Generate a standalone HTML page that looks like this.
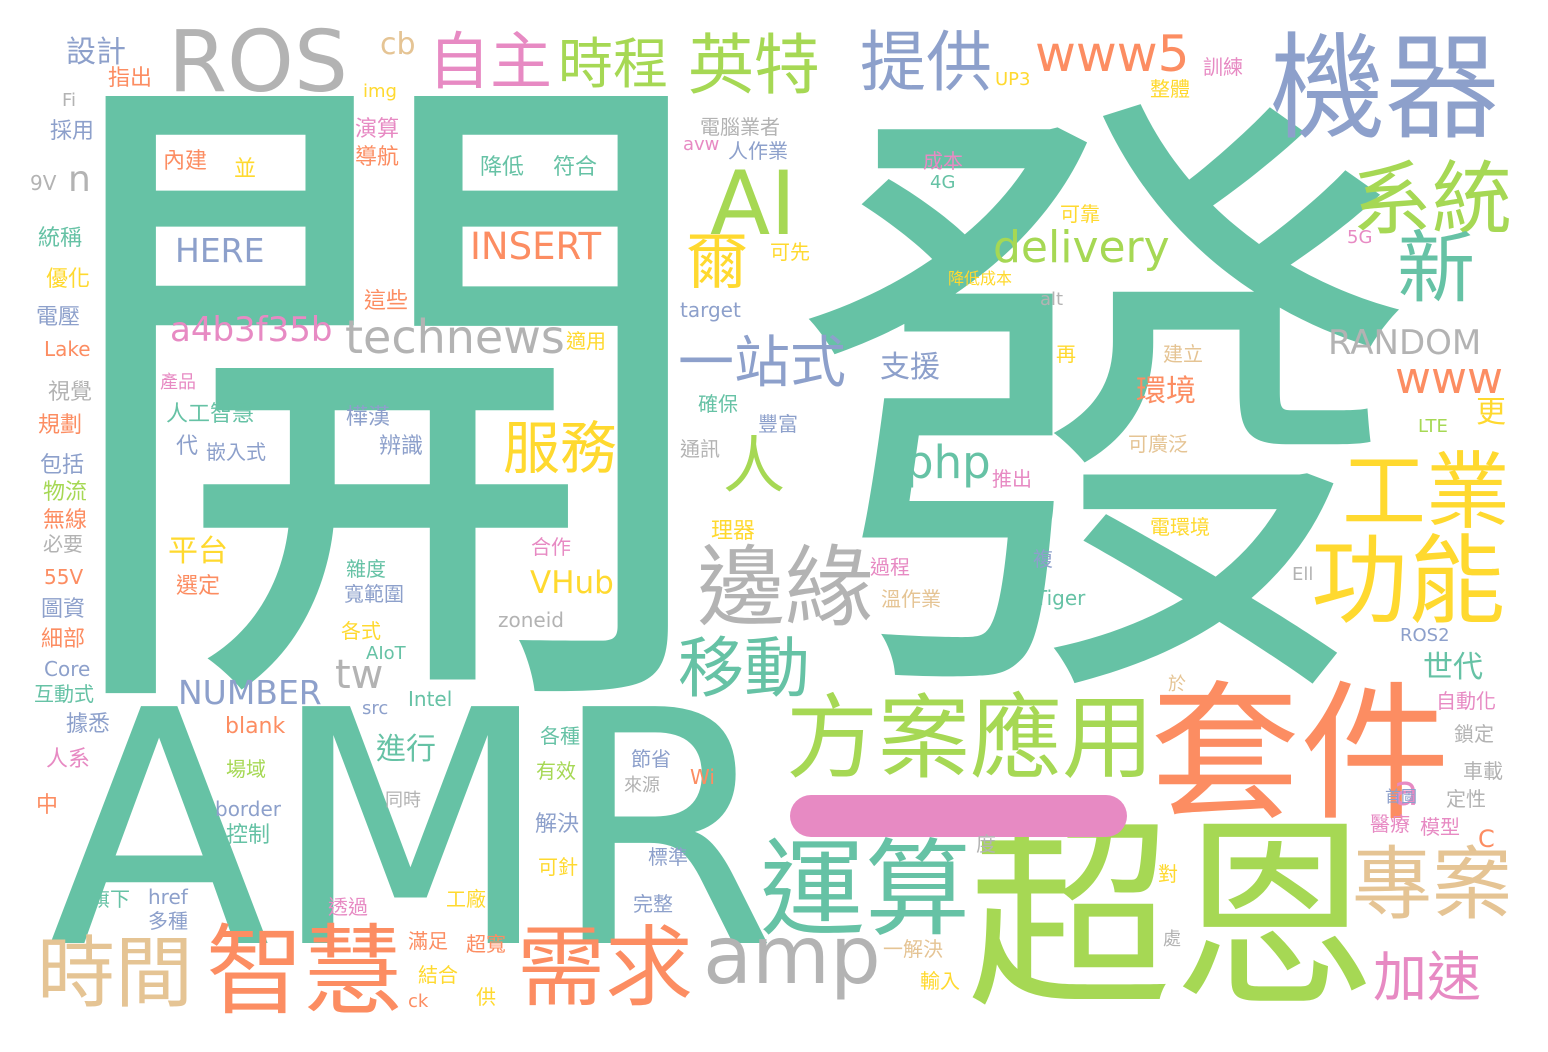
<!DOCTYPE html>
<html><head><meta charset="utf-8"><style>
html,body{margin:0;padding:0;background:#fff;}
#c{position:relative;width:1548px;height:1052px;overflow:hidden;background:#fff;font-family:"DejaVu Sans","Noto Sans CJK TC","Noto Sans CJK SC",sans-serif;}
#c span{position:absolute;line-height:1;white-space:nowrap;}
.t{color:#66c2a5}.o{color:#fc8d62}.b{color:#8da0cb}.p{color:#e78ac3}.g{color:#a6d854}.y{color:#ffd92f}.n{color:#e5c494}.k{color:#b3b3b3}
</style></head><body><div id="c">
<span class="t" style="left:45px;top:64px;font-size:680px">開</span>
<span class="t" style="left:791px;top:99px;font-size:630px">發</span>
<span class="t" style="left:48px;top:668px;font-size:325px">AMR</span>
<span class="g" style="left:967px;top:816px;font-size:205px">超恩</span>
<span class="o" style="left:1150px;top:680px;font-size:150px">套件</span>
<span class="b" style="left:1270px;top:32px;font-size:115px">機器</span>
<span class="g" style="left:786px;top:693px;font-size:92px">方案應用</span>
<div style="position:absolute;left:790px;top:795px;width:337px;height:42px;border-radius:21px;background:#e78ac3"></div>
<span class="t" style="left:760px;top:838px;font-size:105px">運算</span>
<span class="o" style="left:206px;top:923px;font-size:98px">智慧</span>
<span class="o" style="left:517px;top:924px;font-size:88px">需求</span>
<span class="n" style="left:37px;top:935px;font-size:78px">時間</span>
<span class="n" style="left:1352px;top:845px;font-size:80px">專案</span>
<span class="k" style="left:697px;top:544px;font-size:88px">邊緣</span>
<span class="y" style="left:1311px;top:533px;font-size:97px">功能</span>
<span class="y" style="left:1342px;top:450px;font-size:84px">工業</span>
<span class="g" style="left:1352px;top:160px;font-size:80px">系統</span>
<span class="t" style="left:1397px;top:230px;font-size:78px">新</span>
<span class="y" style="left:686px;top:231px;font-size:62px">爾</span>
<span class="g" style="left:723px;top:435px;font-size:62px">人</span>
<span class="p" style="left:428px;top:31px;font-size:62px">自主</span>
<span class="g" style="left:558px;top:37px;font-size:55px">時程</span>
<span class="g" style="left:688px;top:33px;font-size:66px">英特</span>
<span class="b" style="left:860px;top:30px;font-size:66px">提供</span>
<span class="y" style="left:503px;top:421px;font-size:57px">服務</span>
<span class="t" style="left:678px;top:636px;font-size:66px">移動</span>
<span class="b" style="left:678px;top:336px;font-size:56px">一站式</span>
<span class="p" style="left:1373px;top:951px;font-size:54px">加速</span>
<span class="k" style="left:168px;top:20px;font-size:85px">ROS</span>
<span class="g" style="left:710px;top:160px;font-size:88px">AI</span>
<span class="k" style="left:703px;top:916px;font-size:80px">amp</span>
<span class="g" style="left:993px;top:226px;font-size:44px">delivery</span>
<span class="o" style="left:1035px;top:29px;font-size:50px">www5</span>
<span class="k" style="left:345px;top:314px;font-size:46px">technews</span>
<span class="p" style="left:170px;top:313px;font-size:34px">a4b3f35b</span>
<span class="t" style="left:905px;top:440px;font-size:45px">php</span>
<span class="k" style="left:1328px;top:326px;font-size:34px">RANDOM</span>
<span class="o" style="left:1395px;top:357px;font-size:44px">www</span>
<span class="k" style="left:335px;top:655px;font-size:40px">tw</span>
<span class="b" style="left:178px;top:676px;font-size:33px">NUMBER</span>
<span class="y" style="left:530px;top:568px;font-size:31px">VHub</span>
<span class="b" style="left:175px;top:234px;font-size:33px">HERE</span>
<span class="o" style="left:470px;top:228px;font-size:37px">INSERT</span>
<span class="k" style="left:68px;top:162px;font-size:36px">n</span>
<span class="k" style="left:30px;top:173px;font-size:20px">9V</span>
<span class="b" style="left:66px;top:38px;font-size:30px">設計</span>
<span class="o" style="left:108px;top:68px;font-size:22px">指出</span>
<span class="k" style="left:62px;top:92px;font-size:18px">Fi</span>
<span class="b" style="left:50px;top:121px;font-size:22px">採用</span>
<span class="t" style="left:38px;top:228px;font-size:22px">統稱</span>
<span class="y" style="left:46px;top:269px;font-size:22px">優化</span>
<span class="b" style="left:36px;top:307px;font-size:22px">電壓</span>
<span class="o" style="left:44px;top:339px;font-size:20px">Lake</span>
<span class="k" style="left:48px;top:382px;font-size:22px">視覺</span>
<span class="o" style="left:38px;top:415px;font-size:22px">規劃</span>
<span class="b" style="left:40px;top:455px;font-size:22px">包括</span>
<span class="g" style="left:43px;top:482px;font-size:22px">物流</span>
<span class="o" style="left:43px;top:510px;font-size:22px">無線</span>
<span class="k" style="left:43px;top:534px;font-size:20px">必要</span>
<span class="o" style="left:44px;top:567px;font-size:20px">55V</span>
<span class="b" style="left:41px;top:599px;font-size:22px">圖資</span>
<span class="o" style="left:41px;top:629px;font-size:22px">細部</span>
<span class="b" style="left:44px;top:659px;font-size:20px">Core</span>
<span class="t" style="left:34px;top:684px;font-size:20px">互動式</span>
<span class="b" style="left:66px;top:714px;font-size:22px">據悉</span>
<span class="p" style="left:46px;top:749px;font-size:22px">人系</span>
<span class="o" style="left:36px;top:795px;font-size:22px">中</span>
<span class="t" style="left:90px;top:889px;font-size:20px">旗下</span>
<span class="b" style="left:148px;top:887px;font-size:20px">href</span>
<span class="b" style="left:148px;top:911px;font-size:20px">多種</span>
<span class="o" style="left:408px;top:993px;font-size:18px">ck</span>
<span class="y" style="left:476px;top:987px;font-size:20px">供</span>
<span class="y" style="left:418px;top:965px;font-size:20px">結合</span>
<span class="o" style="left:408px;top:931px;font-size:20px">滿足</span>
<span class="o" style="left:466px;top:934px;font-size:20px">超寬</span>
<span class="p" style="left:328px;top:897px;font-size:20px">透過</span>
<span class="y" style="left:446px;top:889px;font-size:20px">工廠</span>
<span class="o" style="left:225px;top:716px;font-size:22px">blank</span>
<span class="g" style="left:226px;top:759px;font-size:20px">場域</span>
<span class="b" style="left:215px;top:799px;font-size:20px">border</span>
<span class="t" style="left:226px;top:825px;font-size:22px">控制</span>
<span class="b" style="left:362px;top:700px;font-size:18px">src</span>
<span class="t" style="left:408px;top:689px;font-size:20px">Intel</span>
<span class="t" style="left:366px;top:645px;font-size:18px">AIoT</span>
<span class="y" style="left:341px;top:621px;font-size:20px">各式</span>
<span class="t" style="left:346px;top:559px;font-size:20px">雜度</span>
<span class="b" style="left:344px;top:584px;font-size:20px">寬範圍</span>
<span class="y" style="left:168px;top:537px;font-size:30px">平台</span>
<span class="o" style="left:176px;top:576px;font-size:22px">選定</span>
<span class="t" style="left:166px;top:404px;font-size:22px">人工智慧</span>
<span class="b" style="left:176px;top:436px;font-size:22px">代</span>
<span class="b" style="left:206px;top:442px;font-size:20px">嵌入式</span>
<span class="p" style="left:160px;top:374px;font-size:18px">產品</span>
<span class="b" style="left:346px;top:407px;font-size:22px">樺漢</span>
<span class="b" style="left:379px;top:436px;font-size:22px">辨識</span>
<span class="o" style="left:364px;top:291px;font-size:22px">這些</span>
<span class="p" style="left:355px;top:119px;font-size:22px">演算</span>
<span class="o" style="left:355px;top:147px;font-size:22px">導航</span>
<span class="y" style="left:363px;top:83px;font-size:18px">img</span>
<span class="n" style="left:380px;top:30px;font-size:30px">cb</span>
<span class="o" style="left:163px;top:151px;font-size:22px">內建</span>
<span class="y" style="left:234px;top:159px;font-size:22px">並</span>
<span class="t" style="left:480px;top:157px;font-size:22px">降低</span>
<span class="t" style="left:553px;top:157px;font-size:22px">符合</span>
<span class="y" style="left:566px;top:331px;font-size:20px">適用</span>
<span class="p" style="left:531px;top:537px;font-size:20px">合作</span>
<span class="k" style="left:498px;top:610px;font-size:20px">zoneid</span>
<span class="t" style="left:540px;top:726px;font-size:20px">各種</span>
<span class="g" style="left:536px;top:761px;font-size:20px">有效</span>
<span class="b" style="left:535px;top:814px;font-size:22px">解決</span>
<span class="y" style="left:538px;top:857px;font-size:20px">可針</span>
<span class="b" style="left:631px;top:749px;font-size:20px">節省</span>
<span class="k" style="left:624px;top:777px;font-size:18px">來源</span>
<span class="o" style="left:690px;top:767px;font-size:20px">Wi</span>
<span class="b" style="left:648px;top:847px;font-size:20px">標準</span>
<span class="b" style="left:633px;top:894px;font-size:20px">完整</span>
<span class="y" style="left:995px;top:71px;font-size:18px">UP3</span>
<span class="k" style="left:700px;top:117px;font-size:20px">電腦業者</span>
<span class="p" style="left:683px;top:136px;font-size:18px">avw</span>
<span class="b" style="left:728px;top:141px;font-size:20px">人作業</span>
<span class="b" style="left:680px;top:300px;font-size:20px">target</span>
<span class="y" style="left:770px;top:242px;font-size:20px">可先</span>
<span class="t" style="left:698px;top:394px;font-size:20px">確保</span>
<span class="b" style="left:758px;top:414px;font-size:20px">豐富</span>
<span class="k" style="left:680px;top:439px;font-size:20px">通訊</span>
<span class="y" style="left:711px;top:521px;font-size:22px">理器</span>
<span class="b" style="left:880px;top:353px;font-size:30px">支援</span>
<span class="p" style="left:992px;top:469px;font-size:20px">推出</span>
<span class="o" style="left:1136px;top:377px;font-size:30px">環境</span>
<span class="p" style="left:923px;top:151px;font-size:20px">成本</span>
<span class="t" style="left:930px;top:174px;font-size:18px">4G</span>
<span class="y" style="left:1060px;top:204px;font-size:20px">可靠</span>
<span class="y" style="left:948px;top:271px;font-size:16px">降低成本</span>
<span class="k" style="left:1040px;top:291px;font-size:18px">alt</span>
<span class="y" style="left:1056px;top:344px;font-size:20px">再</span>
<span class="n" style="left:1163px;top:344px;font-size:20px">建立</span>
<span class="n" style="left:1128px;top:434px;font-size:20px">可廣泛</span>
<span class="g" style="left:1418px;top:418px;font-size:18px">LTE</span>
<span class="y" style="left:1476px;top:398px;font-size:30px">更</span>
<span class="y" style="left:1150px;top:517px;font-size:20px">電環境</span>
<span class="b" style="left:1033px;top:549px;font-size:20px">複</span>
<span class="p" style="left:870px;top:557px;font-size:20px">過程</span>
<span class="n" style="left:881px;top:589px;font-size:20px">溫作業</span>
<span class="t" style="left:1035px;top:588px;font-size:20px">Tiger</span>
<span class="k" style="left:1292px;top:566px;font-size:18px">Ell</span>
<span class="b" style="left:1400px;top:627px;font-size:18px">ROS2</span>
<span class="t" style="left:1423px;top:653px;font-size:30px">世代</span>
<span class="n" style="left:1168px;top:676px;font-size:18px">於</span>
<span class="p" style="left:1436px;top:691px;font-size:20px">自動化</span>
<span class="k" style="left:1454px;top:724px;font-size:20px">鎖定</span>
<span class="k" style="left:1463px;top:761px;font-size:20px">車載</span>
<span class="p" style="left:1393px;top:770px;font-size:42px">a</span>
<span class="b" style="left:1385px;top:789px;font-size:16px">首圖</span>
<span class="k" style="left:1446px;top:789px;font-size:20px">定性</span>
<span class="p" style="left:1370px;top:814px;font-size:20px">醫療</span>
<span class="p" style="left:1420px;top:817px;font-size:20px">模型</span>
<span class="o" style="left:1478px;top:827px;font-size:24px">C</span>
<span class="y" style="left:1158px;top:864px;font-size:20px">對</span>
<span class="k" style="left:976px;top:834px;font-size:20px">度</span>
<span class="k" style="left:1163px;top:931px;font-size:18px">處</span>
<span class="n" style="left:883px;top:939px;font-size:20px">一解決</span>
<span class="y" style="left:920px;top:971px;font-size:20px">輸入</span>
<span class="k" style="left:385px;top:792px;font-size:18px">同時</span>
<span class="t" style="left:376px;top:735px;font-size:30px">進行</span>
<span class="p" style="left:1347px;top:229px;font-size:18px">5G</span>
<span class="p" style="left:1203px;top:57px;font-size:20px">訓練</span>
<span class="y" style="left:1150px;top:79px;font-size:20px">整體</span>
</div></body></html>
